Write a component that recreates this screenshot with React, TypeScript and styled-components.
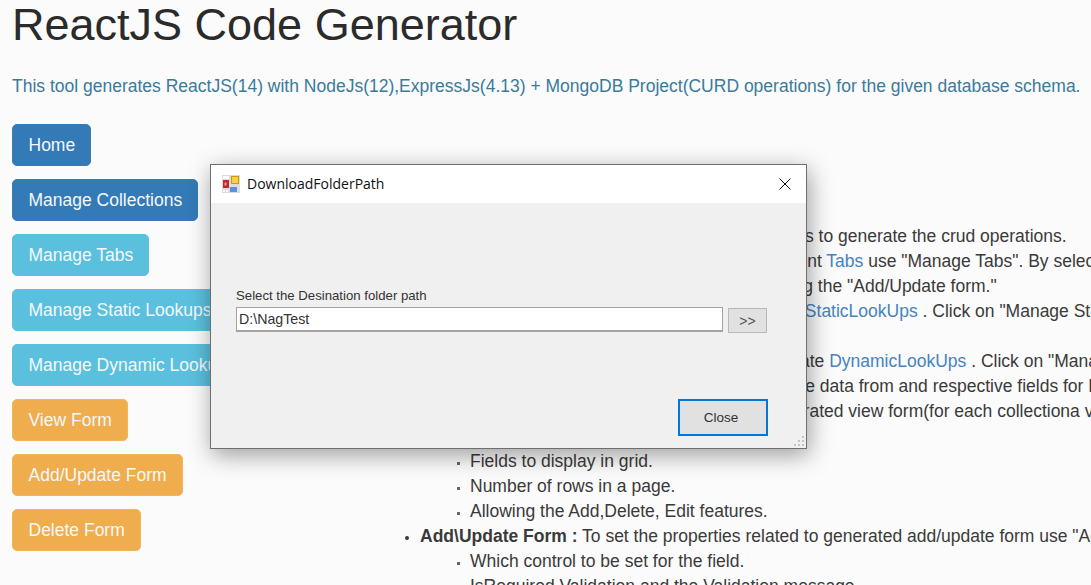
import React from "react";
import styled, { createGlobalStyle } from "styled-components";

const Global = createGlobalStyle`
  html, body { margin: 0; padding: 0; height: 100%; overflow: hidden; background: #fbfbfb; }
  #root { height: 100%; }
`;

const Page = styled.div`
  position: relative;
  width: 1091px;
  height: 585px;
  overflow: hidden;
  padding-left: 12px;
  box-sizing: border-box;
  background: #fbfbfb;
  font-family: "Liberation Sans", Arial, sans-serif;
  color: #333;
`;

const Title = styled.h1`
  margin: 0;
  font-size: 45px;
  font-weight: 400;
  line-height: 50px;
  color: #2b2b2b;
  white-space: nowrap;
`;

const Lead = styled.p`
  margin: 25px 0 0;
  font-size: 17.5px;
  line-height: 22px;
  color: #3a7a9c;
  white-space: nowrap;
`;

const Body = styled.div`
  display: flex;
  margin-top: 27px;
`;

const Sidebar = styled.nav`
  flex: 0 0 auto;
  width: 370px;
  display: flex;
  flex-direction: column;
  align-items: flex-start;
  gap: 13px;
`;

const tones = {
  primary: { bg: "#337ab7", border: "#3a7bb5" },
  info: { bg: "#5bc0de", border: "#5fc0dc" },
  warning: { bg: "#f0ad4e", border: "#f2b45c" },
};

const NavButton = styled.button<{ $tone: keyof typeof tones }>`
  height: 42px;
  padding: 1px 15px 0 15.5px;
  border: 1px solid ${(p) => tones[p.$tone].border};
  border-radius: 5px;
  background: ${(p) => tones[p.$tone].bg};
  color: #f4f8fb;
  font: 400 17.5px/1 "Liberation Sans", Arial, sans-serif;
  white-space: nowrap;
`;

const Content = styled.div`
  flex: 1 1 auto;
  font-size: 17.5px;
  line-height: 25px;
  white-space: nowrap;
  margin-top: 100px;
  color: #3a3a3a;
`;

const TopList = styled.ul`
  margin: 0;
  padding: 0 0 0 38px;
  list-style: disc;
`;

const SubList = styled.ul`
  margin: 0;
  padding: 0 0 0 50px;
  list-style: square;
  & > li::marker { font-size: 10px; color: #666; }
`;

const Item = styled.li`
  &::marker { font-size: 13px; }
`;

const Link = styled.a`
  color: #4683bf;
`;

const Dialog = styled.section`
  position: absolute;
  left: 210px;
  top: 164px;
  width: 597px;
  height: 285px;
  box-sizing: border-box;
  display: flex;
  flex-direction: column;
  border: 1px solid #6e6e6e;
  background: #f0f0f0;
  box-shadow: 2px 6px 22px rgba(0, 0, 0, 0.38);
`;

const TitleBar = styled.header`
  flex: 0 0 38px;
  display: flex;
  align-items: center;
  gap: 7px;
  padding: 0 15px 0 11px;
  background: #fff;
`;

const TitleText = styled.span`
  flex: 1;
  margin-top: -2px;
  font: 400 14px "Open Sans", "Noto Sans", sans-serif;
  color: #111;
`;

const DialogBody = styled.div`
  flex: 1;
  display: flex;
  flex-direction: column;
  padding: 86px 39px 12px 25px;
`;

const FieldLabel = styled.label`
  font: 400 13.2px/14px "Liberation Sans", Arial, sans-serif;
  color: #333;
`;

const FieldRow = styled.div`
  display: flex;
  align-items: flex-start;
  gap: 5px;
  margin-top: 4px;
`;

const PathInput = styled.input`
  flex: 1;
  min-width: 0;
  height: 25px;
  box-sizing: border-box;
  padding: 0 2px;
  border: 1px solid #a3a3a3;
  border-bottom-width: 2px;
  background: #fff;
  font: 400 14.2px "Liberation Sans", Arial, sans-serif;
  color: #333;
  outline: none;
`;

const BrowseButton = styled.button`
  width: 39px;
  height: 25px;
  margin-top: 1px;
  padding: 0;
  border: 1px solid #b8b8b8;
  background: #e1e1e1;
  font: 400 14px "Liberation Sans", Arial, sans-serif;
  color: #555;
`;

const Footer = styled.div`
  margin-top: auto;
  margin-right: -1px;
  display: flex;
  justify-content: flex-end;
`;

const CloseButton = styled.button`
  width: 90px;
  height: 37px;
  padding: 0 4px 0 0;
  border: 2px solid #0078d7;
  background: #e1e1e1;
  font: 400 13.5px "Liberation Sans", Arial, sans-serif;
  color: #333;
`;

const Grip = styled.svg`
  position: absolute;
  right: 1px;
  bottom: 1px;
`;

const AppIcon = () => (
  <svg width="18" height="18" viewBox="0 0 18 18" aria-hidden="true">
    <rect width="18" height="18" fill="#dcdcdc" />
    <rect x="1" y="1" width="6" height="3" fill="#fff" />
    <rect x="1" y="5" width="6" height="8" fill="#c0272d" />
    <rect x="2.5" y="7.5" width="2" height="3" fill="#ee9a93" />
    <rect x="9" y="1" width="8" height="8" fill="#c99a12" />
    <rect x="10" y="2" width="6" height="6" fill="#fbcf3f" />
    <rect x="8" y="12" width="7" height="5" fill="#5f8fd9" />
    <rect x="1" y="15" width="2" height="2" fill="#fff" />
    <rect x="4" y="15" width="2" height="2" fill="#fff" />
  </svg>
);

const CloseIcon = () => (
  <svg width="12" height="12" viewBox="0 0 12 12" aria-hidden="true">
    <path d="M0.5 0.5 L11.5 11.5 M11.5 0.5 L0.5 11.5" stroke="#111" strokeWidth="1" fill="none" />
  </svg>
);

const GripIcon = () => (
  <Grip width="12" height="12" viewBox="0 0 12 12" aria-hidden="true">
    {[[9, 1], [5, 5], [9, 5], [1, 9], [5, 9], [9, 9]].map(([x, y]) => (
      <rect key={`${x}-${y}`} x={x} y={y} width="2" height="2" fill="#c4c4c4" />
    ))}
  </Grip>
);

const navItems: { label: string; tone: keyof typeof tones }[] = [
  { label: "Home", tone: "primary" },
  { label: "Manage Collections", tone: "primary" },
  { label: "Manage Tabs", tone: "info" },
  { label: "Manage Static Lookups", tone: "info" },
  { label: "Manage Dynamic Lookups", tone: "info" },
  { label: "View Form", tone: "warning" },
  { label: "Add/Update Form", tone: "warning" },
  { label: "Delete Form", tone: "warning" },
];

export default function App() {
  return (
    <Page>
      <Global />
      <Title>ReactJS Code Generator</Title>
      <Lead>
        This tool generates ReactJS(14) with NodeJs(12),ExpressJs(4.13) + MongoDB Project(CURD operations) for the given database schema.
      </Lead>
      <Body>
        <Sidebar>
          {navItems.map((n) => (
            <NavButton key={n.label} $tone={n.tone}>{n.label}</NavButton>
          ))}
        </Sidebar>
        <Content>
          <TopList>
            <Item>
              <b>Collection :</b> Use "Manage Collection" to add items to generate the crud operations.
            </Item>
            <Item>
              <b>Tabs :</b> To group the field of the collection in different <Link>Tabs</Link> use "Manage Tabs". By selecting the collection
              <br />
              so the form tabs will be displayed while configuring the "Add/Update form."
            </Item>
            <Item>
              <b>Static Lookups :</b> To show the listed value create <Link>StaticLookUps</Link> . Click on "Manage Static Lookups"
              <br />
              button to add the lookup values.
            </Item>
            <Item>
              <b>Dynamic Lookups :</b> To show the other value create <Link>DynamicLookUps</Link> . Click on "Manage Dynamic Lookups"
              <br />
              and then select the source collection to retrieve the data from and respective fields for Key and Value.
              <br />
            </Item>
            <Item>
              <b>View Form :</b> To set the properties related to generated view form(for each collectiona view form)
              <br />
              use "View Form".
              <SubList>
                <li>Fields to display in grid.</li>
                <li>Number of rows in a page.</li>
                <li>Allowing the Add,Delete, Edit features.</li>
              </SubList>
            </Item>
            <Item>
              <b>Add\Update Form :</b> To set the properties related to generated add/update form use "Add/Update Form".
              <SubList>
                <li>Which control to be set for the field.</li>
                <li>IsRequired Validation and the Validation message.</li>
              </SubList>
            </Item>
          </TopList>
        </Content>
      </Body>
      <Dialog>
        <TitleBar>
          <AppIcon />
          <TitleText>DownloadFolderPath</TitleText>
          <CloseIcon />
        </TitleBar>
        <DialogBody>
          <FieldLabel>Select the Desination folder path</FieldLabel>
          <FieldRow>
            <PathInput defaultValue="D:\NagTest" />
            <BrowseButton>&gt;&gt;</BrowseButton>
          </FieldRow>
          <Footer>
            <CloseButton>Close</CloseButton>
          </Footer>
        </DialogBody>
        <GripIcon />
      </Dialog>
    </Page>
  );
}
